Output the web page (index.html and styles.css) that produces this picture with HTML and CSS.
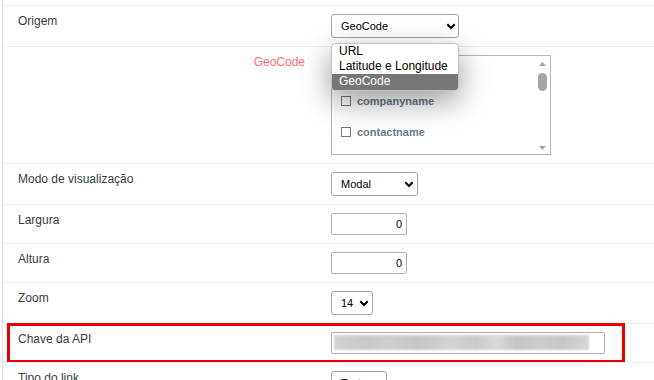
FILE: index.html
```html
<!DOCTYPE html>
<html lang="pt">
<head>
    <meta charset="UTF-8">
    <meta name="viewport" content="width=device-width, initial-scale=1.0">
    <title>Configuração do mapa</title>
    <link rel="stylesheet" href="styles.css">
</head>
<body>
    <div class="form">
        <!-- Origem -->
        <div class="row row-origin">
            <div class="label">Origem</div>
            <div class="field">
                <div class="select w-origin">
                    <span>GeoCode</span>
                    <svg width="10" height="7" viewBox="0 0 10 7"><path d="M1.3 1.3 L5 5 L8.7 1.3" fill="none" stroke="#000" stroke-width="2"/></svg>
                </div>
                <!-- lista aberta do select -->
                <div class="popup">
                    <div class="option">URL</div>
                    <div class="option">Latitude e Longitude</div>
                    <div class="option active">GeoCode</div>
                </div>
            </div>
        </div>

        <!-- campos do GeoCode -->
        <div class="row">
            <div class="label label-geo">GeoCode</div>
            <div class="field">
                <div class="listbox">
                    <div class="list">
                        <div class="item"><span class="check"></span></div>
                        <div class="item"><span class="check"></span><span>companyname</span></div>
                        <div class="item"><span class="check"></span><span>contactname</span></div>
                    </div>
                    <div class="scrollbar">
                        <svg width="7" height="4" viewBox="0 0 7 4"><path d="M0 4 L3.5 0 L7 4 Z" fill="#a3a3a3"/></svg>
                        <div class="thumb"></div>
                        <div class="spacer"></div>
                        <svg width="7" height="4" viewBox="0 0 7 4"><path d="M0 0 L3.5 4 L7 0 Z" fill="#a3a3a3"/></svg>
                    </div>
                </div>
            </div>
        </div>

        <div class="row">
            <div class="label">Modo de visualização</div>
            <div class="field">
                <div class="select w-mode">
                    <span>Modal</span>
                    <svg width="10" height="7" viewBox="0 0 10 7"><path d="M1.3 1.3 L5 5 L8.7 1.3" fill="none" stroke="#000" stroke-width="2"/></svg>
                </div>
            </div>
        </div>

        <div class="row">
            <div class="label">Largura</div>
            <div class="field"><input class="input num" type="text" value="0"></div>
        </div>

        <div class="row">
            <div class="label">Altura</div>
            <div class="field"><input class="input num" type="text" value="0"></div>
        </div>

        <div class="row">
            <div class="label">Zoom</div>
            <div class="field">
                <div class="select w-zoom">
                    <span>14</span>
                    <svg width="10" height="7" viewBox="0 0 10 7"><path d="M1.3 1.3 L5 5 L8.7 1.3" fill="none" stroke="#000" stroke-width="2"/></svg>
                </div>
            </div>
        </div>

        <!-- chave escondida -->
        <div class="row">
            <div class="label">Chave da API</div>
            <div class="field">
                <div class="input key"><div class="blur"></div></div>
            </div>
            <div class="mark"></div>
        </div>

        <div class="row">
            <div class="label">Tipo do link</div>
            <div class="field">
                <div class="select w-link">
                    <span>Texto</span>
                    <svg width="10" height="7" viewBox="0 0 10 7"><path d="M1.3 1.3 L5 5 L8.7 1.3" fill="none" stroke="#000" stroke-width="2"/></svg>
                </div>
            </div>
        </div>
    </div>
</body>
</html>
```

FILE: styles.css
```css
body {
    margin: 0;
    font-family: "Liberation Sans", Arial, sans-serif;
    background-color: #fff;
    overflow: hidden;
}
.form {
    margin-left: 2px;
    border-left: 1px solid #d3dde8;
    padding-top: 5px;
    min-height: 100vh;
}
.row {
    display: grid;
    grid-template-columns: 328px 1fr;
    border-top: 1px solid #eceef2;
    position: relative;
}
.label {
    padding: 8px 15px;
    font-size: 12px;
    line-height: 14px;
    color: #363c42;
}
.label-geo {
    text-align: right;
    padding-right: 26px;
    color: #ff6e6e;
}
.field {
    padding: 8px 0;
    position: relative;
}

/* selects */
.select {
    display: flex;
    align-items: center;
    justify-content: space-between;
    box-sizing: border-box;
    height: 24px;
    padding: 0 3px 0 9px;
    border: 1px solid #9fa7b0;
    border-radius: 3px;
    background-color: #fff;
    font-size: 11px;
    color: #000;
}
.w-origin { width: 128px; padding-right: 2px; }
.w-mode { width: 87px; }
.w-zoom { width: 42px; }
.w-link { width: 56px; }

.popup {
    position: absolute;
    top: 37px;
    left: 0;
    width: 128px;
    box-sizing: border-box;
    border: 1px solid #c4c4c4;
    border-radius: 4px;
    background-color: #fff;
    overflow: hidden;
    box-shadow: 0 10px 30px rgba(0, 0, 0, 0.4);
    z-index: 5;
}
.option {
    height: 15px;
    line-height: 15px;
    padding: 0 7px;
    font-size: 12px;
    color: #000;
    white-space: nowrap;
}
.option.active {
    height: 16px;
    background-color: #777;
    color: #fff;
}

/* lista com checkbox */
.listbox {
    display: flex;
    box-sizing: border-box;
    width: 220px;
    height: 100px;
    border: 1px solid #a9bacb;
}
.list {
    flex: 1;
    padding-left: 9px;
    overflow: hidden;
}
.item {
    display: flex;
    align-items: flex-start;
    gap: 6px;
    height: 31px;
    padding-top: 9px;
    box-sizing: border-box;
    font-size: 11px;
    font-weight: bold;
    line-height: 11px;
    color: #6b7a89;
}
.check {
    width: 10px;
    height: 10px;
    box-sizing: border-box;
    border: 1px solid #6f7a86;
    flex: none;
}
.scrollbar {
    width: 15px;
    display: flex;
    flex-direction: column;
    align-items: center;
    padding: 6px 0 4px;
    box-sizing: border-box;
}
.thumb {
    width: 9px;
    height: 18px;
    margin-top: 7px;
    border-radius: 5px;
    background-color: #a6a6a6;
}
.spacer {
    flex: 1;
}

/* inputs */
.input {
    display: block;
    box-sizing: border-box;
    height: 22px;
    border: 1px solid #a9b0b8;
    border-radius: 2px;
    background-color: #fff;
    margin: 0;
}
.num {
    width: 76px;
    padding: 0 4px 0 0;
    font-family: "Liberation Sans", Arial, sans-serif;
    font-size: 11px;
    text-align: right;
    color: #000;
}
.key {
    width: 274px;
    padding: 2px 0 0 2px;
}
.blur {
    width: 255px;
    height: 15px;
    background: linear-gradient(90deg, #d2d2d2 0%, #c9c9c9 12%, #cfcfcf 22%, #c6c6c6 33%, #d3d3d3 45%, #cbcbcb 56%, #d9d9d9 64%, #c4c4c4 72%, #cdcdcd 80%, #c7c7c7 90%, #d6d6d6 100%);
    filter: blur(1px);
}
.mark {
    position: absolute;
    top: -1px;
    left: 4px;
    width: 618px;
    height: 40px;
    box-sizing: border-box;
    border: 3px solid #e80000;
    pointer-events: none;
}
```
